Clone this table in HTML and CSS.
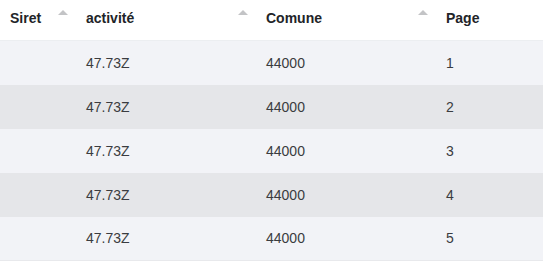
FILE: index.html
```html
<!DOCTYPE html>
<html>
<head>
<meta charset="utf-8">
<link rel="stylesheet" href="styles.css">
</head>
<body>
<table class="grid">
  <colgroup>
    <col class="c1"><col class="c2"><col class="c3"><col class="c4">
  </colgroup>
  <thead>
    <tr>
      <th><div class="hd"><span>Siret</span><i class="sort"></i></div></th>
      <th><div class="hd"><span>activité</span><i class="sort"></i></div></th>
      <th><div class="hd"><span>Comune</span><i class="sort"></i></div></th>
      <th><div class="hd"><span>Page</span></div></th>
    </tr>
  </thead>
  <tbody>
    <tr><td></td><td>47.73Z</td><td>44000</td><td>1</td></tr>
    <tr><td></td><td>47.73Z</td><td>44000</td><td>2</td></tr>
    <tr><td></td><td>47.73Z</td><td>44000</td><td>3</td></tr>
    <tr><td></td><td>47.73Z</td><td>44000</td><td>4</td></tr>
    <tr><td></td><td>47.73Z</td><td>44000</td><td>5</td></tr>
  </tbody>
</table>
</body>
</html>
```
FILE: styles.css
```css
html, body {
  margin: 0;
  padding: 0;
  background: #ffffff;
  font-family: "Liberation Sans", Arial, sans-serif;
}
.grid {
  width: 543px;
  border-collapse: collapse;
  table-layout: fixed;
}
.c1 { width: 76px; }
.c2 { width: 180px; }
.c3 { width: 180px; }
.c4 { width: 107px; }
th {
  height: 40px;
  padding: 0 8px 0 10px;
  text-align: left;
  font-size: 14px;
  font-weight: bold;
  color: #222428;
  border-bottom: 1px solid #eceef1;
  vertical-align: middle;
}
.hd {
  display: flex;
  justify-content: space-between;
  align-items: flex-start;
  height: 16px;
  line-height: 16px;
  position: relative;
  top: -2px;
}
.sort {
  width: 0;
  height: 0;
  border-left: 5px solid transparent;
  border-right: 5px solid transparent;
  border-bottom: 5px solid #c3c4c6;
  margin-top: 0;
}
td {
  height: 44px;
  padding: 0 10px;
  font-size: 14px;
  color: #3a3c40;
  vertical-align: middle;
  box-sizing: border-box;
}
tbody tr:nth-child(odd) { background: #f2f3f7; }
tbody tr:nth-child(even) { background: #e5e6e9; }
tbody tr:last-child td { border-bottom: 1px solid #e8e9ec; }
```
